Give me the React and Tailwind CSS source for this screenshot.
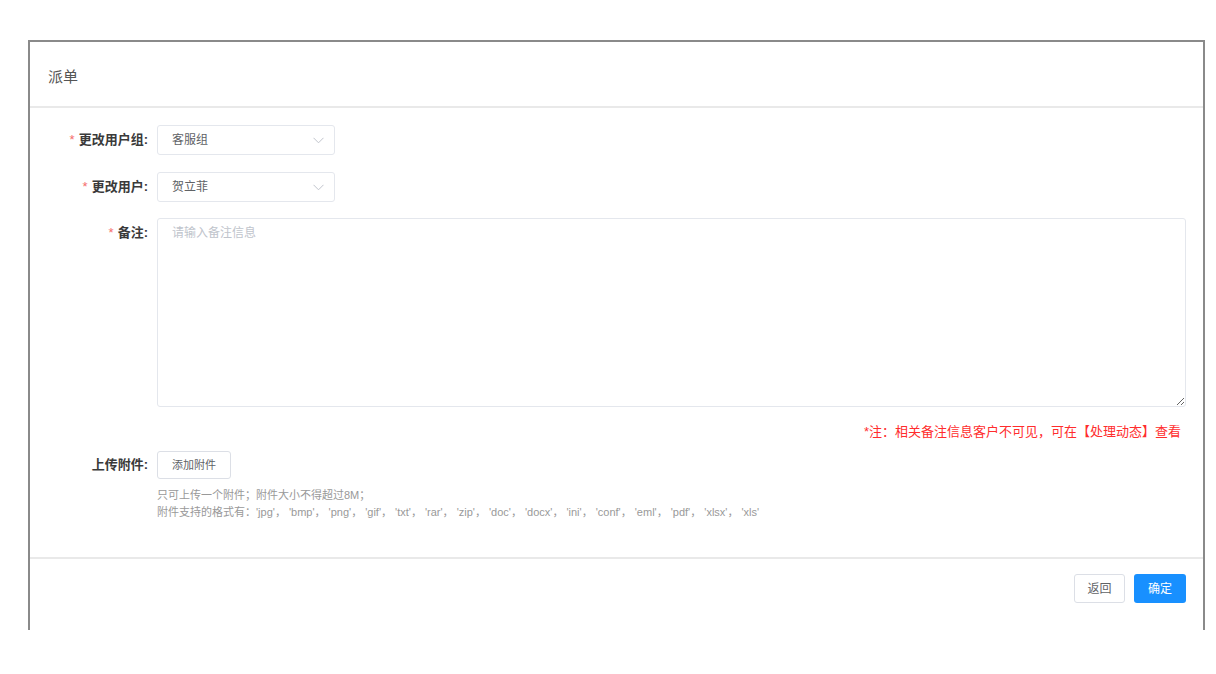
import React from 'react';

const font = { fontFamily: '"Liberation Sans", "Noto Sans CJK SC", sans-serif' };

const Chevron = () => (
  <svg width="11" height="7" viewBox="0 0 11 7" fill="none">
    <path d="M0.5 0.8 L5.5 5.8 L10.5 0.8" stroke="#c0c4cc" strokeWidth="1" />
  </svg>
);

const Select = ({ value }) => (
  <div className="w-[178px] h-[30px] border border-[#e4e7ed] rounded-[3px] flex items-center justify-between pl-[14px] pr-[10px] text-[12px] text-[#606266]">
    <span>{value}</span>
    <Chevron />
  </div>
);

const Label = ({ children, required }) => (
  <div className="w-[118px] shrink-0 text-right text-[13px] font-bold text-[#3a3a3a] leading-[30px]">
    {required && <span className="text-[#f56c6c] mr-[4px] font-normal">*</span>}
    {children}
  </div>
);

export default function App() {
  return (
    <div className="w-[1216px] h-[674px] bg-white pt-[40px] pl-[28px]" style={font}>
      <div className="w-[1177px] h-[590px] border-2 border-b-0 border-[#8a8a8a] flex flex-col">
        <div className="h-[66px] shrink-0 border-b-2 border-[#e9e9e9] flex items-center pt-[6px] pl-[18px] text-[15px] text-[#555]">
          派单
        </div>

        <div className="h-[449px] shrink-0 pt-[17px] pr-[17px] flex flex-col">
          <div className="flex gap-[9px]">
            <Label required>更改用户组:</Label>
            <Select value="客服组" />
          </div>
          <div className="flex gap-[9px] mt-[17px]">
            <Label required>更改用户:</Label>
            <Select value="贺立菲" />
          </div>
          <div className="flex gap-[9px] mt-[16px]">
            <Label required>备注:</Label>
            <textarea
              className="flex-1 h-[189px] border border-[#e4e7ed] rounded-[3px] px-[14px] py-[5px] text-[12px] text-[#606266] placeholder-[#c0c4cc] outline-none"
              placeholder="请输入备注信息"
              style={font}
            />
          </div>
          <div className="text-right text-[13px] text-[#ff2d2d] mt-[16px] pr-[5px] leading-[18px]">
            *注：相关备注信息客户不可见，可在【处理动态】查看
          </div>
          <div className="flex gap-[9px] mt-[10px]">
            <div className="w-[118px] shrink-0 text-right text-[13px] font-bold text-[#3a3a3a] leading-[28px]">上传附件:</div>
            <div className="flex flex-col items-start">
              <button className="h-[28px] px-[14px] border border-[#dcdfe6] rounded-[3px] text-[11px] text-[#606266] bg-white">
                添加附件
              </button>
              <div className="mt-[8px] text-[11px] text-[#999] leading-[17px]">
                <p>只可上传一个附件；附件大小不得超过8M；</p>
                <p>附件支持的格式有：'jpg'， 'bmp'， 'png'， 'gif'， 'txt'， 'rar'， 'zip'， 'doc'， 'docx'， 'ini'， 'conf'， 'eml'， 'pdf'， 'xlsx'， 'xls'</p>
              </div>
            </div>
          </div>
        </div>

        <div className="border-t-2 border-[#e9e9e9] flex justify-end gap-[9px] pt-[15px] pr-[17px]">
          <button className="w-[51px] h-[29px] border border-[#dcdfe6] rounded-[3px] text-[12px] text-[#606266] bg-white">返回</button>
          <button className="w-[52px] h-[29px] rounded-[3px] text-[12px] text-white bg-[#1890ff]">确定</button>
        </div>
      </div>
    </div>
  );
}
